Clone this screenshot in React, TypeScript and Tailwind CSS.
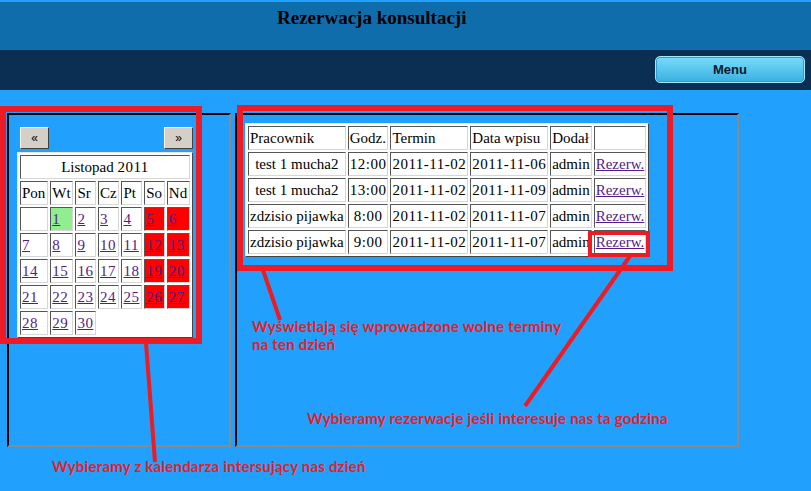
import React from "react";

const weeks: (number | null)[][] = [
  [null, 1, 2, 3, 4, 5, 6],
  [7, 8, 9, 10, 11, 12, 13],
  [14, 15, 16, 17, 18, 19, 20],
  [21, 22, 23, 24, 25, 26, 27],
  [28, 29, 30],
];

const weekend = [5, 6, 12, 13, 19, 20, 26, 27];

const dayNames = ["Pon", "Wt", "Sr", "Cz", "Pt", "So", "Nd"];

const slots = [
  ["test 1 mucha2", "12:00", "2011-11-02", "2011-11-06", "admin"],
  ["test 1 mucha2", "13:00", "2011-11-02", "2011-11-09", "admin"],
  ["zdzisio pijawka", "8:00", "2011-11-02", "2011-11-07", "admin"],
  ["zdzisio pijawka", "9:00", "2011-11-02", "2011-11-07", "admin"],
];

const cell =
  "border border-t-[#555] border-l-[#555] border-b-[#d6d6d6] border-r-[#d6d6d6] p-[1px] leading-[20px] whitespace-nowrap";

const outerTable =
  "border-separate border-spacing-[2px] border border-t-[#e6e6e6] border-l-[#e6e6e6] border-b-[#444] border-r-[#444] bg-white text-[15px]";

const link = "text-[#551a8b] underline";

const Calendar = () => {
  return (
    <table className={`${outerTable} w-[176px]`}>
      <tbody>
        <tr>
          <td colSpan={7} className={`${cell} text-center`}>
            Listopad <span className="tracking-[0.5px]">2011</span>
          </td>
        </tr>
        <tr>
          {dayNames.map((d) => (
            <td key={d} className={`${cell} text-left`}>
              {d}
            </td>
          ))}
        </tr>
        {weeks.map((week, i) => (
          <tr key={i}>
            {week.map((day, j) => {
              let bg = "";
              if (day === 1) bg = "bg-[#90ee90]";
              if (day && weekend.includes(day)) bg = "bg-[#ff0000]";
              return (
                <td key={j} className={`${cell} text-left ${bg}`}>
                  {day ? (
                    <a className={`${link} tracking-[0.5px]`}>{day}</a>
                  ) : null}
                </td>
              );
            })}
          </tr>
        ))}
      </tbody>
    </table>
  );
};

const SlotTable = () => {
  return (
    <table className={outerTable}>
      <tbody>
        <tr>
          {["Pracownik", "Godz.", "Termin", "Data wpisu", "Dodał", ""].map(
            (h, i) => (
              <td key={i} className={`${cell} text-left`}>
                {h}
              </td>
            )
          )}
        </tr>
        {slots.map((row, i) => (
          <tr key={i}>
            {row.map((v, j) => (
              <td
                key={j}
                className={`${cell} text-center ${
                  j >= 1 && j <= 3 ? "tracking-[0.5px]" : ""
                }`}
              >
                {v}
              </td>
            ))}
            <td className={`${cell} text-center`}>
              <a className={link}>Rezerw.</a>
            </td>
          </tr>
        ))}
      </tbody>
    </table>
  );
};

const panel =
  "h-[334px] border-2 border-t-black border-l-black border-b-[#8a8a8a] border-r-[#8a8a8a]";

const navButton =
  "w-[29px] h-[22px] bg-[#d4d0c8] border border-t-white border-l-white border-b-[#404040] border-r-[#404040] font-['Liberation_Sans',sans-serif] text-[12px] leading-none";

const note =
  "absolute font-['Lato',sans-serif] font-bold text-[15px] tracking-[0.2px] leading-[18px] text-[#ed1c24]";

export default function App() {
  return (
    <div className="relative w-[811px] h-[491px] overflow-hidden bg-[#21a1fd] font-['Liberation_Serif',serif] text-[16px] text-black">
      <div className="h-[2px]" />
      <div className="h-[48px] bg-[#106dab] pl-[277px] pt-[5px]">
        <h1 className="text-[19px] font-bold leading-[22px]">
          Rezerwacja konsultacji
        </h1>
      </div>
      <div className="h-[40px] bg-[#0a2f52] flex justify-end pt-[6px] pr-[6px]">
        <button className="w-[150px] h-[27px] rounded-[5px] border border-[#a2e8ff] bg-linear-to-b from-[#78dcfa] to-[#36b0e2] shadow-[inset_0_0_0_1px_#2d9fcf] font-['Liberation_Sans',sans-serif] font-bold text-[13px] text-[#0a1a2a]">
          Menu
        </button>
      </div>

      <div className="flex gap-[4px] pl-[7px] mt-[23px]">
        <div className={`${panel} w-[224px] pl-[8px] pt-[12px]`}>
          <div className="flex justify-between w-[173px] ml-[3px] mb-[3px]">
            <button className={navButton}>«</button>
            <button className={navButton}>»</button>
          </div>
          <Calendar />
        </div>
        <div className={`${panel} w-[504px] p-[8px]`}>
          <SlotTable />
        </div>
      </div>

      {/* annotations drawn over the screenshot */}
      <svg
        className="absolute inset-0 pointer-events-none"
        width={811}
        height={491}
        viewBox="0 0 811 491"
      >
        <g fill="none" stroke="#ed1c24">
          <rect x={3} y={109} width={196} height={232} strokeWidth={6} />
          <rect x={240} y={108} width={430} height={160} strokeWidth={6} />
          <rect x={590} y={233} width={58} height={22} strokeWidth={4} />
          <line x1={263} y1={270} x2={280} y2={320} strokeWidth={4} />
          <line x1={630} y1={256} x2={525} y2={406} strokeWidth={4} />
          <line x1={146} y1={343} x2={155} y2={462} strokeWidth={4} />
        </g>
      </svg>
      <div className={`${note} left-[252px] top-[317px]`}>
        Wyświetlają się wprowadzone wolne terminy
        <br />
        na ten dzień
      </div>
      <div className={`${note} left-[307px] top-[409px]`}>
        Wybieramy rezerwacje jeśli interesuje nas ta godzina
      </div>
      <div className={`${note} left-[52px] top-[457px]`}>
        Wybieramy z kalendarza intersujący nas dzień
      </div>
    </div>
  );
}
